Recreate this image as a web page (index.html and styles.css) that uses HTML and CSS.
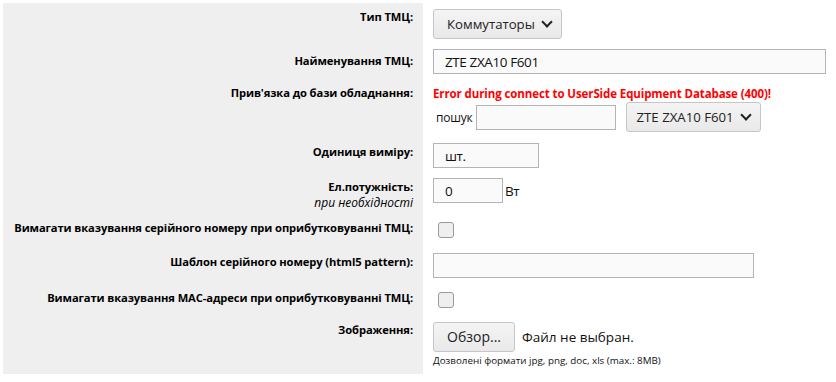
FILE: index.html
```html
<!DOCTYPE html>
<html lang="uk">

<head>
    <meta charset="UTF-8">
    <meta name="viewport" content="width=device-width, initial-scale=1.0">
    <title>ТМЦ</title>
    <link rel="stylesheet" href="styles.css">
</head>

<body>
    <form class="form">
        <!--тип-->
        <div class="lbl">Тип ТМЦ:</div>
        <div class="fld fld-sel">
            <div class="sel">Коммутаторы <span class="arr"></span></div>
        </div>

        <div class="lbl lbl-2">Найменування ТМЦ:</div>
        <div class="fld">
            <input type="text" class="txt txt-name" value="ZTE ZXA10 F601">
        </div>

        <!--прив'язка-->
        <div class="lbl">Прив'язка до бази обладнання:</div>
        <div class="fld fld-base">
            <div class="err">Error during connect to UserSide Equipment Database (400)!</div>
            <div class="search">
                <span class="search-lbl">пошук</span>
                <input type="text" class="txt txt-search" value="">
                <div class="sel sel-base">ZTE ZXA10 F601 <span class="arr"></span></div>
            </div>
        </div>

        <div class="lbl">Одиниця виміру:</div>
        <div class="fld">
            <input type="text" class="txt txt-unit" value="шт.">
        </div>

        <div class="lbl">Ел.потужність:<br><i>при необхідності</i></div>
        <div class="fld">
            <input type="text" class="txt txt-power" value="0"><span class="unit">Вт</span>
        </div>

        <div class="lbl lbl-chk">Вимагати вказування серійного номеру при оприбутковуванні ТМЦ:</div>
        <div class="fld fld-chk">
            <span class="chk"></span>
        </div>

        <div class="lbl">Шаблон серійного номеру (html5 pattern):</div>
        <div class="fld">
            <input type="text" class="txt txt-pattern" value="">
        </div>

        <div class="lbl lbl-mac">Вимагати вказування MAC-адреси при оприбутковуванні ТМЦ:</div>
        <div class="fld fld-chk fld-mac">
            <span class="chk"></span>
        </div>

        <div class="lbl lbl-img">Зображення:</div>
        <div class="fld">
            <div class="file">
                <span class="btn">Обзор...</span>
                <span class="file-name">Файл не выбран.</span>
            </div>
            <div class="hint">Дозволені формати jpg, png, doc, xls (max.: 8MB)</div>
        </div>
    </form>
</body>

</html>
```

FILE: styles.css
```css
body {
    margin: 3px;
    font-family: "Open Sans", "Liberation Sans", sans-serif;
    color: #111;
    background: #fff;
}

.form {
    display: grid;
    grid-template-columns: 420px 1fr;
}

.lbl {
    background: #efefef;
    text-align: right;
    font-weight: bold;
    font-size: 11.2px;
    letter-spacing: -0.1px;
    line-height: 16px;
    white-space: nowrap;
    color: #000;
    padding: 6px 10px 0 0;
}

.lbl i {
    font-weight: normal;
    letter-spacing: 0;
    font-size: 12px;
}

.lbl-2 {
    padding-top: 9px;
}

.lbl-chk {
    padding-top: 9px;
}

.lbl-mac {
    padding-top: 7px;
}

.lbl-img {
    padding-top: 5px;
}

.fld {
    padding: 5px 10px;
    font-size: 14px;
}

.fld-sel {
    padding-top: 6px;
}

/*поля вводу*/
.txt {
    box-sizing: border-box;
    height: 25px;
    margin: 0;
    border: 1px solid #b4b4b4;
    background: #fafafa;
    font-family: inherit;
    font-size: 13.5px;
    letter-spacing: -0.4px;
    padding: 0 11px;
    color: #111;
    vertical-align: middle;
}

.txt-name {
    width: 393px;
}

.txt-search {
    width: 140px;
    margin: 0 10px 0 3px;
}

.txt-unit {
    width: 106px;
}

.txt-power {
    width: 70px;
}

.txt-pattern {
    width: 321px;
}

.unit {
    vertical-align: middle;
    margin-left: 2px;
    font-size: 13.5px;
    letter-spacing: -0.4px;
}

/*селекти*/
.sel {
    display: inline-flex;
    align-items: center;
    box-sizing: border-box;
    height: 30px;
    padding: 0 10px 0 13px;
    border: 1px solid #c6c6c6;
    border-radius: 3px;
    background: linear-gradient(#f4f4f4, #e9e9e9);
    color: #222;
    font-size: 13.2px;
}

.sel-base {
    padding-left: 10px;
}

.arr {
    width: 6px;
    height: 6px;
    border-right: 2px solid #222;
    border-bottom: 2px solid #222;
    transform: rotate(45deg);
    margin: -4px 0 0 8px;
}

.err {
    color: #ff0000;
    font-weight: bold;
    font-size: 11.5px;
    letter-spacing: -0.1px;
    line-height: 17px;
    padding-top: 1px;
}

.fld-base {
    padding-bottom: 6px;
}

.search {
    display: flex;
    align-items: center;
    height: 30px;
    padding-left: 3px;
}

.search-lbl {
    font-size: 12px;
    letter-spacing: -0.2px;
}

.fld-chk {
    padding: 11px 15px 10px;
}

.fld-mac {
    padding-top: 9px;
    padding-bottom: 9px;
}

.chk {
    display: block;
    box-sizing: border-box;
    width: 16px;
    height: 16px;
    border: 1px solid #9a9a9a;
    border-radius: 3px;
    background: #efefef;
}

/*файл*/
.file {
    display: flex;
    align-items: center;
}

.btn {
    box-sizing: border-box;
    height: 30px;
    line-height: 28px;
    padding: 0 13px;
    border: 1px solid #c6c6c6;
    border-radius: 3px;
    background: linear-gradient(#f4f4f4, #e9e9e9);
    color: #222;
}

.file-name {
    margin-left: 7px;
    font-size: 13.5px;
}

.hint {
    font-size: 9.8px;
    line-height: 16px;
    margin-top: 1px;
}
```
